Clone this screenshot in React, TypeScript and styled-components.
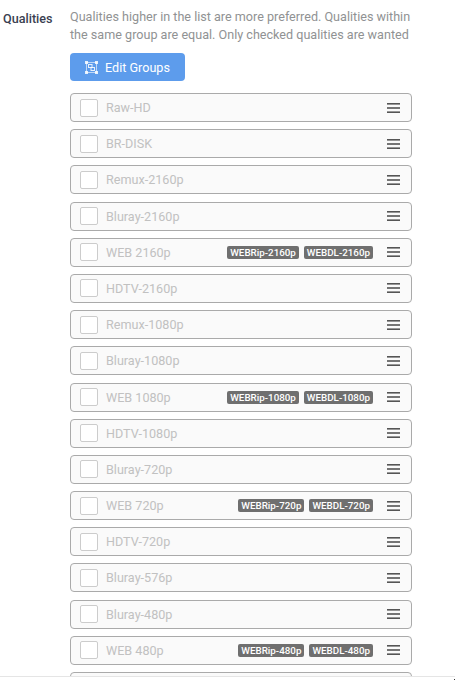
import React from 'react';
import styled, { createGlobalStyle } from 'styled-components';

const GlobalStyle = createGlobalStyle`
  html, body {
    margin: 0;
    padding: 0;
    background: #fff;
    height: 680px;
    overflow: hidden;
  }
  body {
    font-family: Roboto, "Liberation Sans", sans-serif;
  }
`;

const Page = styled.div`
  position: relative;
  width: 455px;
  height: 680px;
  overflow: hidden;
  display: flex;
  align-items: flex-start;
  box-sizing: border-box;
  padding-top: 8px;
`;

const Label = styled.label`
  width: 70px;
  padding-left: 3px;
  box-sizing: border-box;
  font-size: 12.6px;
  line-height: 21px;
  font-weight: 500;
  color: #3a3f51;
`;

const Body = styled.div`
  width: 342px;
  flex-shrink: 0;
`;

const HelpText = styled.div`
  font-size: 12.6px;
  line-height: 18px;
  color: #909293;
  white-space: nowrap;
`;

const EditButton = styled.button`
  display: flex;
  align-items: center;
  justify-content: center;
  gap: 7px;
  width: 115px;
  height: 28px;
  margin: 9px 0 12px;
  padding: 0;
  border: 0;
  border-radius: 4px;
  background: #5d9cec;
  color: #fff;
  font-family: inherit;
  font-size: 12.6px;
`;

const List = styled.div`
  display: flex;
  flex-direction: column;
  gap: 7.2px;
`;

const Row = styled.div`
  display: flex;
  align-items: center;
  flex-shrink: 0;
  height: 29px;
  box-sizing: border-box;
  padding-left: 9px;
  padding-right: 11px;
  border: 1px solid #aaa;
  border-radius: 4px;
  background: #fafafa;
`;

const CheckBox = styled.span`
  width: 18px;
  height: 18px;
  box-sizing: border-box;
  border: 1px solid #ccc;
  border-radius: 2px;
  background: #fff;
  margin-right: 8px;
`;

const Name = styled.span`
  flex: 1;
  font-size: 12.6px;
  color: #c1c1c1;
`;

const Tag = styled.span`
  margin-right: 5px;
  padding: 0 3px;
  height: 13px;
  line-height: 13px;
  border-radius: 2px;
  background: #6f6f6f;
  color: #fff;
  font-size: 9.8px;
  font-weight: 500;
`;

const Handle = styled.svg`
  width: 13px;
  height: 10px;
  margin-left: 9px;
  color: #555;
`;

const Footer = styled.div`
  position: absolute;
  left: 0;
  right: 0;
  bottom: 0;
  height: 3px;
  background: #fff;
  border-top: 1px solid #e5e5e5;

  &::after {
    content: '';
    position: absolute;
    right: 0;
    bottom: 0;
    width: 1px;
    height: 1px;
    background: #333;
  }
`;

const GroupsIcon = () => (
  <svg width="13" height="13" viewBox="0 0 13 13" fill="none" stroke="#fff" strokeWidth="1">
    <rect x="1.5" y="1.5" width="10" height="10" opacity="0.6" />
    <rect x="0.5" y="0.5" width="2" height="2" fill="#fff" opacity="0.85" />
    <rect x="10.5" y="0.5" width="2" height="2" fill="#fff" opacity="0.85" />
    <rect x="0.5" y="10.5" width="2" height="2" fill="#fff" opacity="0.85" />
    <rect x="10.5" y="10.5" width="2" height="2" fill="#fff" opacity="0.85" />
    <rect x="3.5" y="3.5" width="3.5" height="3" opacity="0.85" />
    <rect x="6" y="6.5" width="3.5" height="3" opacity="0.85" />
  </svg>
);

const qualities: { name: string; tags?: string[] }[] = [
  { name: 'Raw-HD' },
  { name: 'BR-DISK' },
  { name: 'Remux-2160p' },
  { name: 'Bluray-2160p' },
  { name: 'WEB 2160p', tags: ['WEBRip-2160p', 'WEBDL-2160p'] },
  { name: 'HDTV-2160p' },
  { name: 'Remux-1080p' },
  { name: 'Bluray-1080p' },
  { name: 'WEB 1080p', tags: ['WEBRip-1080p', 'WEBDL-1080p'] },
  { name: 'HDTV-1080p' },
  { name: 'Bluray-720p' },
  { name: 'WEB 720p', tags: ['WEBRip-720p', 'WEBDL-720p'] },
  { name: 'HDTV-720p' },
  { name: 'Bluray-576p' },
  { name: 'Bluray-480p' },
  { name: 'WEB 480p', tags: ['WEBRip-480p', 'WEBDL-480p'] },
  { name: '' },
];

export default function App() {
  return (
    <Page>
      <GlobalStyle />
      <Label>Qualities</Label>
      <Body>
        <HelpText>
          Qualities higher in the list are more preferred. Qualities within
          <br />
          the same group are equal. Only checked qualities are wanted
        </HelpText>
        <EditButton>
          <GroupsIcon />
          Edit Groups
        </EditButton>
        <List>
          {qualities.map((q) => (
            <Row key={q.name}>
              <CheckBox />
              <Name>{q.name}</Name>
              {q.tags?.map((t) => <Tag key={t}>{t}</Tag>)}
              <Handle viewBox="0 0 13 10">
                <rect y="0" width="13" height="1.6" fill="currentColor" />
                <rect y="4.2" width="13" height="1.6" fill="currentColor" />
                <rect y="8.4" width="13" height="1.6" fill="currentColor" />
              </Handle>
            </Row>
          ))}
        </List>
      </Body>
      <Footer />
    </Page>
  );
}
